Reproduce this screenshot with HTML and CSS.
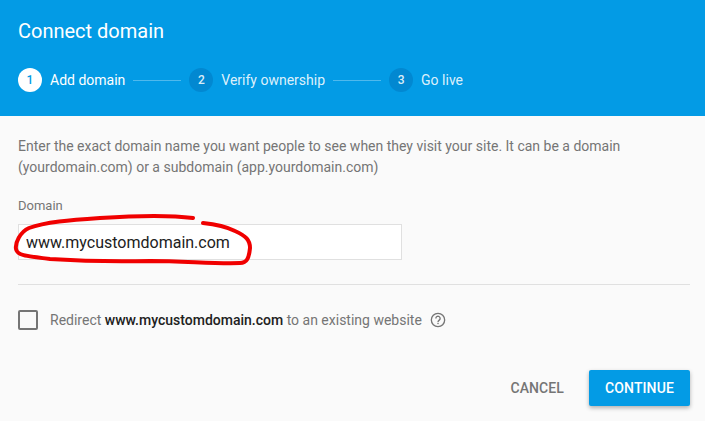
FILE: index.html
```html
<!DOCTYPE html>
<html lang="en">
<head>
    <meta charset="UTF-8">
    <meta name="viewport" content="width=device-width, initial-scale=1.0">
    <title>Connect domain</title>
    <link rel="stylesheet" href="styles.css">
</head>
<body>
    <div class="dialog">
        <header class="dialog-header">
            <h1 class="dialog-title">Connect domain</h1>
            <div class="stepper">
                <div class="step step-active"><span class="step-num">1</span>Add domain</div>
                <span class="step-line"></span>
                <div class="step"><span class="step-num">2</span>Verify ownership</div>
                <span class="step-line"></span>
                <div class="step"><span class="step-num">3</span>Go live</div>
            </div>
        </header>

        <main class="dialog-body">
            <p class="intro">Enter the exact domain name you want people to see when they visit your site. It can be a domain (yourdomain.com) or a subdomain (app.yourdomain.com)</p>
            <label class="field-label" for="domain">Domain</label>
            <input class="field-input" id="domain" type="text" value="www.mycustomdomain.com">
            <hr class="divider">
            <div class="redirect">
                <span class="checkbox"></span>
                <span class="redirect-text">Redirect <b>www.mycustomdomain.com</b> to an existing website</span>
                <svg class="help-icon" viewBox="0 0 24 24" width="16" height="16">
                    <circle cx="12" cy="12" r="10" fill="none" stroke="#757575" stroke-width="2"/>
                    <path d="M8.8 9.6a3.2 3.2 0 1 1 5 2.6c-1.1.8-1.8 1.4-1.8 2.8" fill="none" stroke="#757575" stroke-width="2"/>
                    <rect x="11" y="16.2" width="2" height="2" fill="#757575"/>
                </svg>
            </div>
            <div class="actions">
                <button class="btn btn-cancel">CANCEL</button>
                <button class="btn btn-continue">CONTINUE</button>
            </div>
        </main>

        <!-- red marker scribble drawn on top of the screenshot -->
        <svg class="scribble" viewBox="0 0 705 421" width="705" height="421">
            <path d="M193 218C170 215 130 216 100 218C70 220 45 222 29 228C20 232 15 243 16 249C17 255 24 256 50 259C80 261 110 262 150 261C185 261 215 264 240 263C247 263 249 258 250 248C250 240 246 236 235 231C225 226 213 224 203 223"/>
        </svg>
    </div>
</body>
</html>
```

FILE: styles.css
```css
* {
    box-sizing: border-box;
}

body {
    margin: 0;
    background-color: #fafafa;
    color: #757575;
    font-family: Roboto, Arial, sans-serif;
}

.dialog {
    position: relative;
    width: 705px;
    height: 421px;
    overflow: hidden;
}

.dialog-header {
    height: 116px;
    padding: 18px 18px 0;
    background-color: #039be5;
    color: white;
}

.dialog-title {
    margin: 0;
    font-size: 20px;
    font-weight: 400;
    line-height: 26px;
}

.stepper {
    display: flex;
    align-items: center;
    margin-top: 24px;
    font-size: 14px;
}

.step {
    display: flex;
    align-items: center;
    gap: 8px;
    color: rgba(255, 255, 255, 0.87);
}

.step-num {
    display: flex;
    align-items: center;
    justify-content: center;
    width: 24px;
    height: 24px;
    border-radius: 50%;
    background-color: #0288d1;
    font-size: 12px;
    font-weight: 500;
}

.step-active {
    color: white;
}

.step-active .step-num {
    background-color: white;
    color: #039be5;
}

.step-line {
    width: 48px;
    height: 1px;
    margin: 0 8px;
    background-color: rgba(255, 255, 255, 0.3);
}

.dialog-body {
    padding: 20px 15px 0 18px;
}

.intro {
    margin: 0;
    font-size: 14px;
    line-height: 21px;
}

.field-label {
    display: block;
    margin-top: 20px;
    font-size: 13px;
    line-height: 16px;
}

.field-input {
    display: block;
    width: 384px;
    height: 36px;
    margin-top: 10px;
    padding: 0 7px;
    border: 1px solid #e0e0e0;
    background-color: white;
    color: #212121;
    font-family: inherit;
    font-size: 16px;
}

.divider {
    margin: 24px 0 0;
    border: none;
    border-top: 1px solid #e0e0e0;
}

.redirect {
    display: flex;
    align-items: center;
    margin-top: 25px;
    font-size: 14px;
}

.redirect b {
    color: #212121;
    font-weight: 500;
}

.checkbox {
    width: 20px;
    height: 20px;
    margin-right: 12px;
    border: 2px solid #757575;
    border-radius: 2px;
}

.help-icon {
    margin-left: 8px;
}

.actions {
    display: flex;
    justify-content: flex-end;
    align-items: center;
    gap: 9px;
    margin-top: 40px;
}

.btn {
    height: 36px;
    border: none;
    border-radius: 2px;
    font-family: inherit;
    font-size: 14px;
    font-weight: 500;
    letter-spacing: 0.1px;
}

.btn-cancel {
    padding: 0 16px;
    background: none;
    color: #757575;
}

.btn-continue {
    width: 101px;
    background-color: #039be5;
    color: white;
    box-shadow: 0 2px 4px rgba(0, 0, 0, 0.3);
}

.scribble {
    position: absolute;
    top: 0;
    left: 0;
    pointer-events: none;
}

.scribble path {
    fill: none;
    stroke: #f00000;
    stroke-width: 4;
    stroke-linecap: round;
}
```
